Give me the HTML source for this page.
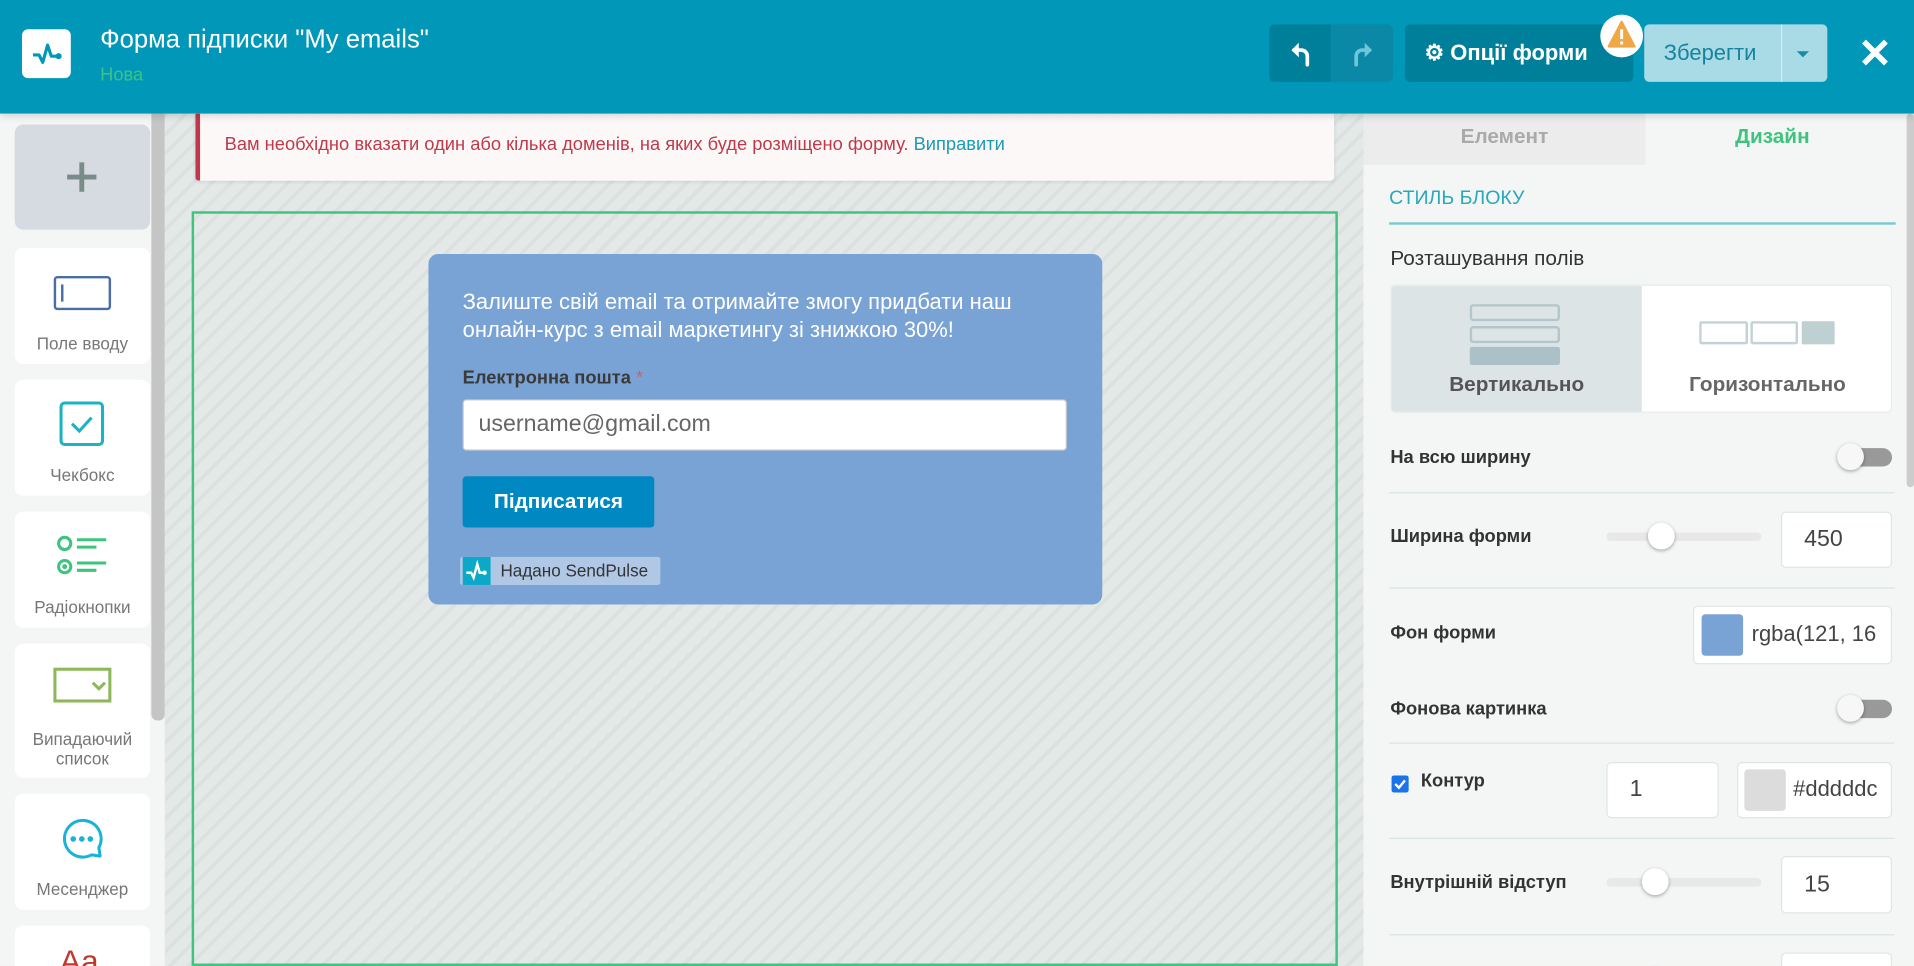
<!DOCTYPE html>
<html><head><meta charset="utf-8">
<style>
html,body{margin:0;padding:0;width:1914px;height:966px;overflow:hidden;background:#f4f6f5;}
#w{position:absolute;left:0;top:0;width:1568px;height:791px;transform:scale(1.22066,1.2212);transform-origin:0 0;font-family:"Liberation Sans",sans-serif;overflow:hidden;background:#f4f6f5;}
.a{position:absolute;}
.hdr{left:0;top:0;width:1568px;height:93px;background:#0097b8;z-index:2;box-shadow:0 2px 6px rgba(0,0,0,.15);}
.card{position:absolute;left:12px;width:111px;background:#fff;border-radius:7px;text-align:center;color:#777;font-size:14px;}
.card span{position:absolute;left:0;right:0;}
.lbl{position:absolute;left:1139px;font-size:15px;font-weight:bold;color:#333;}
.div{position:absolute;left:1138px;width:414px;height:1px;background:#d8e3e3;}
.inp{position:absolute;background:#fff;border:1px solid #dfe5e5;border-radius:4px;box-sizing:border-box;font-size:19px;color:#444;}
.tog{position:absolute;width:45px;height:20px;}
.tog i{position:absolute;left:8px;top:4px;width:37px;height:15px;border-radius:8px;background:#999;}
.tog b{position:absolute;left:0;top:0;width:22px;height:22px;border-radius:50%;background:#f7f7f7;box-shadow:0 1px 3px rgba(0,0,0,.35);}
.sl{position:absolute;left:1316px;width:127px;height:7px;border-radius:4px;background:#e8e8e8;}
.sl b{position:absolute;top:-8px;width:22px;height:22px;border-radius:50%;background:#fff;box-shadow:0 1px 3px rgba(0,0,0,.35);}
</style></head><body><div id="w">
<div class="a hdr">
  <div class="a" style="left:18px;top:24px;width:40px;height:40px;background:#fff;border-radius:5px;">
    <svg width="40" height="40" viewBox="0 0 40 40"><path d="M9 21h5l3 6 4-14 3 9h5" fill="none" stroke="#0097b8" stroke-width="2.6" stroke-linejoin="round"/><circle cx="30" cy="22" r="2.5" fill="#0097b8"/></svg>
  </div>
  <div class="a" style="left:82px;top:21px;font-size:21px;color:#fff;">Форма підписки "My emails"</div>
  <div class="a" style="left:82px;top:53px;font-size:15px;color:#3dc47e;">Нова</div>
  <div class="a" style="left:1040px;top:20px;width:101px;height:47px;background:#0a88a5;border-radius:4px;overflow:hidden;">
    <div class="a" style="left:0;top:0;width:50px;height:47px;background:#007f9a;"></div>
    <svg class="a" style="left:14px;top:12px;" width="24" height="24" viewBox="0 0 24 24"><path d="M6 9h6a5 5 0 0 1 5 5v7" fill="none" stroke="#fff" stroke-width="3" stroke-linecap="round"/><path d="M10 3L4 9l6 6Z" fill="#fff"/></svg>
    <svg class="a" style="left:64px;top:12px;" width="24" height="24" viewBox="0 0 24 24"><path d="M18 9h-6a5 5 0 0 0-5 5v7" fill="none" stroke="#6fc6d8" stroke-width="3" stroke-linecap="round"/><path d="M14 3l6 6-6 6Z" fill="#6fc6d8"/></svg>
  </div>
  <div class="a" style="left:1151px;top:20px;width:187px;height:47px;background:#007f9a;border-radius:4px;color:#fff;font-weight:bold;font-size:18px;line-height:47px;">
    <span style="margin-left:16px;">⚙ Опції форми</span>
  </div>
  <div class="a" style="left:1311px;top:12px;width:35px;height:35px;border-radius:50%;background:#fff;">
    <svg width="35" height="35" viewBox="0 0 35 35"><path d="M17.5 6 L28 26 H7 Z" fill="#f0a847" stroke="#f0a847" stroke-width="2" stroke-linejoin="round"/><rect x="16.3" y="12" width="2.4" height="8" fill="#fff"/><rect x="16.3" y="22" width="2.4" height="2.4" fill="#fff"/></svg>
  </div>
  <div class="a" style="left:1347px;top:20px;width:150px;height:47px;background:#a8dbe6;border-radius:4px;">
    <div class="a" style="left:16px;top:13px;font-size:18px;color:#16849e;">Зберегти</div>
    <div class="a" style="left:112px;top:0;width:1px;height:47px;background:#d6eef3;"></div>
    <div class="a" style="left:125px;top:22px;width:0;height:0;border-left:5px solid transparent;border-right:5px solid transparent;border-top:5px solid #1a8aa3;"></div>
  </div>
  <svg class="a" style="left:1524px;top:31px;" width="24" height="24" viewBox="0 0 24 24"><path d="M3 3L21 21M21 3L3 21" stroke="#fff" stroke-width="4.5"/></svg>
</div>

<div class="a" style="left:0;top:93px;width:124px;height:698px;background:#f4f5f5;"></div>
<div class="a" style="left:124px;top:93px;width:11px;height:698px;background:#f4f5f5;"></div>
<div class="a" style="left:124px;top:93px;width:11px;height:497px;background:#c5c5c5;border-radius:0 0 5px 5px;"></div>
<div class="card" style="top:102px;height:86px;background:#d5dbe0;">
  <svg class="a" style="left:41px;top:29px;" width="28" height="28"><path d="M14 2V26M2 14H26" stroke="#7a8c8a" stroke-width="4"/></svg>
</div>
<div class="card" style="top:203px;height:95px;">
  <svg class="a" style="left:31px;top:22px;" width="50" height="30"><rect x="2" y="2" width="45" height="26" rx="2" fill="none" stroke="#4a6fa5" stroke-width="2"/><path d="M8 8V22" stroke="#4a6fa5" stroke-width="2"/></svg>
  <span style="top:70px;">Поле вводу</span></div>
<div class="card" style="top:311px;height:95px;">
  <svg class="a" style="left:36px;top:17px;" width="40" height="40"><rect x="2" y="2" width="34" height="34" rx="3" fill="none" stroke="#1ab3c4" stroke-width="2.5"/><path d="M11 19l6 6 10-11" fill="none" stroke="#1ab3c4" stroke-width="2.5"/></svg>
  <span style="top:70px;">Чекбокс</span></div>
<div class="card" style="top:419px;height:95px;">
  <svg class="a" style="left:33px;top:17px;" width="50" height="40"><circle cx="8" cy="9" r="5" fill="none" stroke="#3dc47e" stroke-width="2.5"/><circle cx="8" cy="28" r="5" fill="none" stroke="#3dc47e" stroke-width="2.5"/><circle cx="8" cy="28" r="2" fill="#3dc47e"/><path d="M18 6H42M18 12H34M18 25H42M18 31H34" stroke="#3dc47e" stroke-width="2.5"/></svg>
  <span style="top:70px;">Радіокнопки</span></div>
<div class="card" style="top:527px;height:110px;">
  <svg class="a" style="left:31px;top:19px;" width="50" height="32"><rect x="2" y="2" width="45" height="26" fill="none" stroke="#8db85a" stroke-width="2.5"/><path d="M33 13l5 5 5-5" fill="none" stroke="#8db85a" stroke-width="2.5"/></svg>
  <span style="top:70px;line-height:16px;">Випадаючий<br>список</span></div>
<div class="card" style="top:650px;height:95px;">
  <svg class="a" style="left:36px;top:17px;" width="40" height="40"><path d="M33 27A15 15 0 1 0 27 33L34 34Z" fill="none" stroke="#1ab3d8" stroke-width="2.5" stroke-linejoin="round"/><circle cx="12" cy="20" r="2.3" fill="#1ab3d8"/><circle cx="19" cy="20" r="2.3" fill="#1ab3d8"/><circle cx="26" cy="20" r="2.3" fill="#1ab3d8"/></svg>
  <span style="top:70px;">Месенджер</span></div>
<div class="card" style="top:758px;height:60px;">
  <div class="a" style="left:37px;top:14px;font-size:26px;color:#c0392b;">Aa</div></div>

<div class="a" style="left:135px;top:93px;width:982px;height:698px;background:repeating-linear-gradient(-45deg,#e4e9e8 0 8px,#dae1e0 8px 11px);"></div>
<div class="a" style="left:160px;top:93px;width:933px;height:55px;background:#fdf8f8;border-left:4px solid #c0394b;box-sizing:border-box;border-radius:0 0 3px 3px;box-shadow:0 1px 3px rgba(0,0,0,.1);">
  <div class="a" style="left:20px;top:17px;font-size:15px;color:#c0394b;white-space:nowrap;">Вам необхідно вказати один або кілька доменів, на яких буде розміщено форму. <span style="color:#1a9bb5;">Виправити</span></div>
</div>
<div class="a" style="left:157px;top:173px;width:939px;height:618px;border:2px solid #3dc47e;box-sizing:border-box;"></div>
<div class="a" style="left:351px;top:208px;width:552px;height:287px;background:#79a3d5;border-radius:8px;">
  <div class="a" style="left:28px;top:28px;font-size:18px;color:#fff;line-height:23px;width:480px;">Залиште свій email та отримайте змогу придбати наш онлайн-курс з email маркетингу зі знижкою 30%!</div>
  <div class="a" style="left:28px;top:93px;font-size:15px;font-weight:bold;color:#3a3a3a;">Електронна пошта <span style="color:#e05a5a;font-weight:normal;">*</span></div>
  <div class="a" style="left:28px;top:119px;width:495px;height:42px;background:#fff;border-radius:3px;border:1px solid #ccc;box-sizing:border-box;font-size:19px;color:#666;line-height:40px;padding-left:12px;">username@gmail.com</div>
  <div class="a" style="left:28px;top:182px;width:157px;height:42px;background:#0088c2;border-radius:3px;color:#fff;font-weight:bold;font-size:17px;line-height:42px;text-align:center;">Підписатися</div>
  <div class="a" style="left:26px;top:248px;width:164px;height:23px;background:#b0c8e6;border-radius:2px;">
    <svg class="a" style="left:2px;top:0;" width="23" height="23"><rect width="23" height="23" fill="#0ba8c7"/><path d="M3 13h4l2 4 3-11 2 7h3" fill="none" stroke="#fff" stroke-width="2"/><circle cx="18" cy="13" r="1.8" fill="#fff"/></svg>
    <div class="a" style="left:33px;top:3px;font-size:14px;color:#333;white-space:nowrap;">Надано SendPulse</div>
  </div>
</div>

<div class="a" style="left:1117px;top:93px;width:451px;height:698px;background:#f4f6f5;"></div>
<div class="a" style="left:1117px;top:93px;width:231px;height:42px;background:#ececec;color:#aaa;font-weight:bold;font-size:17px;text-align:center;line-height:38px;">Елемент</div>
<div class="a" style="left:1348px;top:93px;width:208px;height:42px;color:#3dc47e;font-weight:bold;font-size:17px;text-align:center;line-height:38px;">Дизайн</div>
<div class="a" style="left:1562px;top:93px;width:6px;height:306px;background:#ccc;border-radius:3px;"></div>
<div class="a" style="left:1138px;top:154px;font-size:16px;color:#2aa8b8;">СТИЛЬ БЛОКУ</div>
<div class="a" style="left:1138px;top:182px;width:415px;height:2px;background:#7ccacf;"></div>
<div class="a" style="left:1139px;top:202px;font-size:17px;color:#333;">Розташування полів</div>
<div class="a" style="left:1139px;top:233px;width:411px;height:105px;background:#fff;border-radius:4px;overflow:hidden;border:1px solid #e6ecec;box-sizing:border-box;">
  <div class="a" style="left:0;top:0;width:205px;height:105px;background:#dde4e6;"></div>
  <svg class="a" style="left:64px;top:15px;" width="76" height="50"><rect x="1" y="1" width="72" height="12" rx="2" fill="none" stroke="#b3c6cb" stroke-width="2"/><rect x="1" y="19" width="72" height="12" rx="2" fill="none" stroke="#b3c6cb" stroke-width="2"/><rect x="0" y="35" width="74" height="15" rx="2" fill="#abc1c7"/></svg>
  <div class="a" style="left:0;top:71px;width:205px;text-align:center;font-size:17px;font-weight:bold;color:#555;">Вертикально</div>
  <svg class="a" style="left:252px;top:29px;" width="112" height="20"><rect x="1" y="1" width="38" height="17" rx="1" fill="none" stroke="#c3d2d5" stroke-width="2"/><rect x="43" y="1" width="37" height="17" rx="1" fill="none" stroke="#c3d2d5" stroke-width="2"/><rect x="84" y="0" width="27" height="19" rx="1" fill="#bfd0d3"/></svg>
  <div class="a" style="left:205px;top:71px;width:206px;text-align:center;font-size:17px;font-weight:bold;color:#666;">Горизонтально</div>
</div>
<div class="lbl" style="top:366px;">На всю ширину</div>
<div class="tog" style="left:1505px;top:363px;"><i></i><b></b></div>
<div class="div" style="top:403px;"></div>
<div class="lbl" style="top:431px;">Ширина форми</div>
<div class="sl" style="top:436px;"><b style="left:34px;"></b></div>
<div class="inp" style="left:1459px;top:419px;width:91px;height:46px;line-height:44px;padding-left:18px;">450</div>
<div class="div" style="top:481px;"></div>
<div class="lbl" style="top:510px;">Фон форми</div>
<div class="inp" style="left:1387px;top:496px;width:163px;height:48px;">
  <div class="a" style="left:6px;top:6px;width:34px;height:34px;background:#79a3d5;border-radius:3px;"></div>
  <div class="a" style="left:47px;top:12px;font-size:18px;color:#444;white-space:nowrap;">rgba(121, 16</div>
</div>
<div class="lbl" style="top:572px;">Фонова картинка</div>
<div class="tog" style="left:1505px;top:569px;"><i></i><b></b></div>
<div class="div" style="top:608px;"></div>
<div class="a" style="left:1140px;top:635px;width:14px;height:14px;background:#1a73e8;border-radius:2px;"><svg width="14" height="14"><path d="M3 7l3 3 5-6" fill="none" stroke="#fff" stroke-width="2"/></svg></div>
<div class="lbl" style="left:1164px;top:631px;">Контур</div>
<div class="inp" style="left:1316px;top:624px;width:92px;height:46px;line-height:44px;padding-left:18px;">1</div>
<div class="inp" style="left:1423px;top:624px;width:127px;height:46px;">
  <div class="a" style="left:5px;top:5px;width:34px;height:34px;background:#dcdcdc;border-radius:3px;"></div>
  <div class="a" style="left:45px;top:11px;font-size:18px;color:#444;">#dddddc</div>
</div>
<div class="div" style="top:686px;"></div>
<div class="lbl" style="top:714px;">Внутрішній відступ</div>
<div class="sl" style="top:719px;"><b style="left:29px;"></b></div>
<div class="inp" style="left:1459px;top:701px;width:91px;height:47px;line-height:45px;padding-left:18px;">15</div>
<div class="div" style="top:765px;"></div>
<div class="inp" style="left:1459px;top:780px;width:91px;height:47px;"></div>
<div class="sl" style="top:800px;"><b style="left:29px;"></b></div>
</div></body></html>
